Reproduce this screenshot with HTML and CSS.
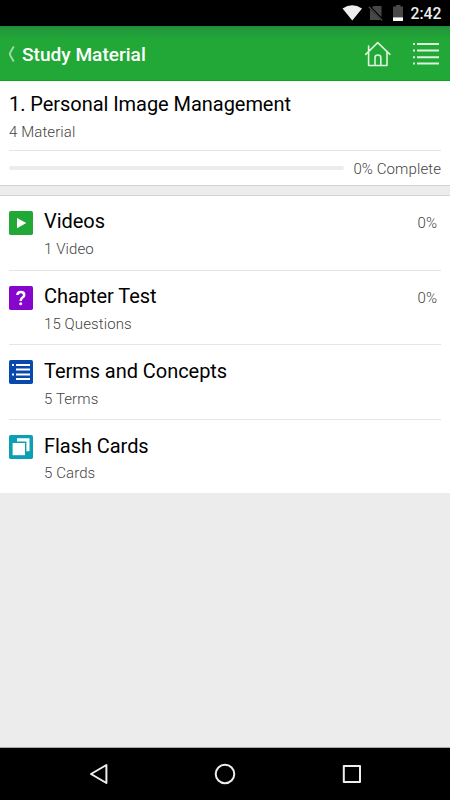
FILE: index.html
```html
<!DOCTYPE html>
<html lang="en">
<head>
<meta charset="utf-8">
<title>Study Material</title>
<link rel="stylesheet" href="styles.css">
</head>
<body>
<div class="status">
  <svg class="status-icons" width="64" height="26" viewBox="0 0 64 26">
    <path d="M1.5 8.5Q11.2 1.8 21 8.5L11.3 20.6Z" fill="#eee"/>
    <path d="M32.5 6H40.5V17L31 7.5ZM29 9L40 20H29Z" fill="#484848"/>
    <path d="M27.8 6.8L41.3 20.5" stroke="#484848" stroke-width="1.3"/>
    <path d="M52 6.5H55V5H59.5V6.5H62V17H52Z" fill="#484848"/>
    <path d="M52 17.3H62V21H52Z" fill="#fff"/>
  </svg>
  <span class="clock">2:42</span>
</div>
<header class="bar">
  <svg class="back" width="8" height="18" viewBox="0 0 8 18"><path d="M5.8 1.5Q1.8 8 1.8 9Q1.8 10 5.8 16.5" fill="none" stroke="#a3d9ab" stroke-width="1.9"/></svg>
  <h1>Study Material</h1>
  <svg class="home" width="28" height="28" viewBox="0 0 28 28" fill="none" stroke="#dcf2df" stroke-width="1.6" stroke-linejoin="round" stroke-linecap="round"><path d="M2.7 14.3L14.7 2.7L26.9 14.3M5.6 12V25.5H24V12M5.6 10.5V6M12 25V17.5Q12 15 14.9 15Q17.8 15 17.8 17.5V25"/></svg>
  <svg class="menu" width="26" height="24" viewBox="0 0 26 24" stroke="#dcf2df" stroke-width="2"><path d="M0 2H2M4 2H26M0 8.6H2M4 8.6H26M0 15.2H2M4 15.2H26M0 21.6H2M4 21.6H26"/></svg>
</header>
<main>
  <section class="summary">
    <h2>1. Personal Image Management</h2>
    <p>4 Material</p>
    <div class="progress"><div class="track"></div><span>0% Complete</span></div>
  </section>
  <section class="list">
    <article class="row">
      <svg class="tile" viewBox="0 0 24 24"><rect width="24" height="24" rx="1.8" fill="#22a837"/><path d="M8 7L17.3 12L8 17.2Z" fill="#fff"/></svg>
      <div class="text"><h2>Videos</h2><p>1 Video</p></div><span class="percent">0%</span>
    </article>
    <article class="row">
      <svg class="tile" viewBox="0 0 24 24"><rect width="24" height="24" rx="1.8" fill="#8705cd"/><path d="M8.4 9Q8.6 6.1 11.8 6.1Q15.2 6.1 15.2 8.9Q15.2 10.3 13.5 11.5Q11.7 12.7 11.7 15" fill="none" stroke="#fff" stroke-width="2.5"/><circle cx="11.7" cy="17.7" r="1.5" fill="#fff"/></svg>
      <div class="text"><h2>Chapter Test</h2><p>15 Questions</p></div><span class="percent">0%</span>
    </article>
    <article class="row">
      <svg class="tile" viewBox="0 0 24 24"><rect width="24" height="24" rx="1.8" fill="#0849ae"/><path d="M3 5H5M3 14.5H5M7 5H21M7 9.5H21M7 14.5H21M7 19H21" stroke="#fff" stroke-width="2"/></svg>
      <div class="text"><h2>Terms and Concepts</h2><p>5 Terms</p></div>
    </article>
    <article class="row">
      <svg class="tile" viewBox="0 0 24 24"><rect width="24" height="24" rx="1.8" fill="#0a9fb2"/><path d="M8 3.2H20.5V16.2H17.4V6.6H8Z" fill="#fff"/><path d="M3.6 8H16V20.2H3.6Z" fill="#fff"/></svg>
      <div class="text"><h2>Flash Cards</h2><p>5 Cards</p></div>
    </article>
  </section>
</main>
<nav class="nav">
  <svg viewBox="0 0 450 52" fill="none" stroke="#eee" stroke-width="2" stroke-linejoin="round"><path d="M91 26L106.4 17V35Z"/><circle cx="225" cy="26" r="9.3"/><rect x="343.8" y="18" width="16.2" height="16"/></svg>
</nav>
</body>
</html>
```

FILE: styles.css
```css
* { box-sizing: border-box; }
body {
  margin: 0;
  height: 800px;
  display: flex;
  flex-direction: column;
  overflow: hidden;
  background: #ececec;
  color: #000;
  font-family: Roboto, sans-serif;
}
h1, h2, p { margin: 0; }
svg { display: block; flex: none; }
.status {
  height: 26px;
  flex: none;
  display: flex;
  padding-left: 341px;
  background: #000;
}
.clock {
  margin-left: 5.5px;
  color: #eee;
  font-size: 15.7px;
  font-weight: 500;
  line-height: 28px;
}
.bar {
  height: 55px;
  flex: none;
  display: flex;
  align-items: center;
  padding: 2px 11px 0 8px;
  background: linear-gradient(#20863a 0, #22963a 2px, #22a837 14px);
  border-bottom: 1px solid #08a51a;
}
.bar h1 {
  flex: 1;
  margin-left: 6px;
  color: #fff;
  font-size: 19.1px;
  font-weight: 500;
}
.menu { margin-left: 22px; }
main { flex: 1; }
.summary {
  height: 105px;
  padding: 0 9px;
  background: #fff;
  border-bottom: 1px solid #d3d3d3;
}
h2 {
  font-size: 20px;
  font-weight: 400;
  line-height: 24px;
  letter-spacing: -.05px;
}
p, .progress, .percent {
  font-size: 15px;
  font-weight: 300;
  line-height: 18px;
  color: #444;
}
p { margin-top: 6.9px; letter-spacing: .1px; }
.summary h2 { padding-top: 11px; line-height: 24px; }
.summary p { margin-top: 7px; }
.progress {
  display: flex;
  align-items: center;
  gap: 9px;
  height: 35px;
  margin-top: 9px;
  border-top: 1px solid #e5e5e5;
}
.progress span {
  padding-top: 2px;
  letter-spacing: .09px;
}
.track {
  flex: 1;
  height: 4px;
  border-radius: 2px;
  background: #ececec;
}
.list {
  height: 298px;
  margin-top: 9px;
  padding: 0 9px;
  background: #fff;
  border-top: 1px solid #d3d3d3;
}
.row {
  display: flex;
  height: 74.7px;
  padding-top: 13.45px;
  border-bottom: 1px solid #e5e5e5;
}
.row:last-child { border-bottom: 0; }
.tile { width: 24px; height: 24px; margin-top: 1.4px; }
.text { flex: 1; margin-left: 11px; }
.percent { margin: 4.5px 4px 0 0; }
.nav {
  height: 53px;
  flex: none;
  background: #000;
  border-top: 1px solid #aaa;
}
.nav svg { width: 450px; height: 52px; }
```
